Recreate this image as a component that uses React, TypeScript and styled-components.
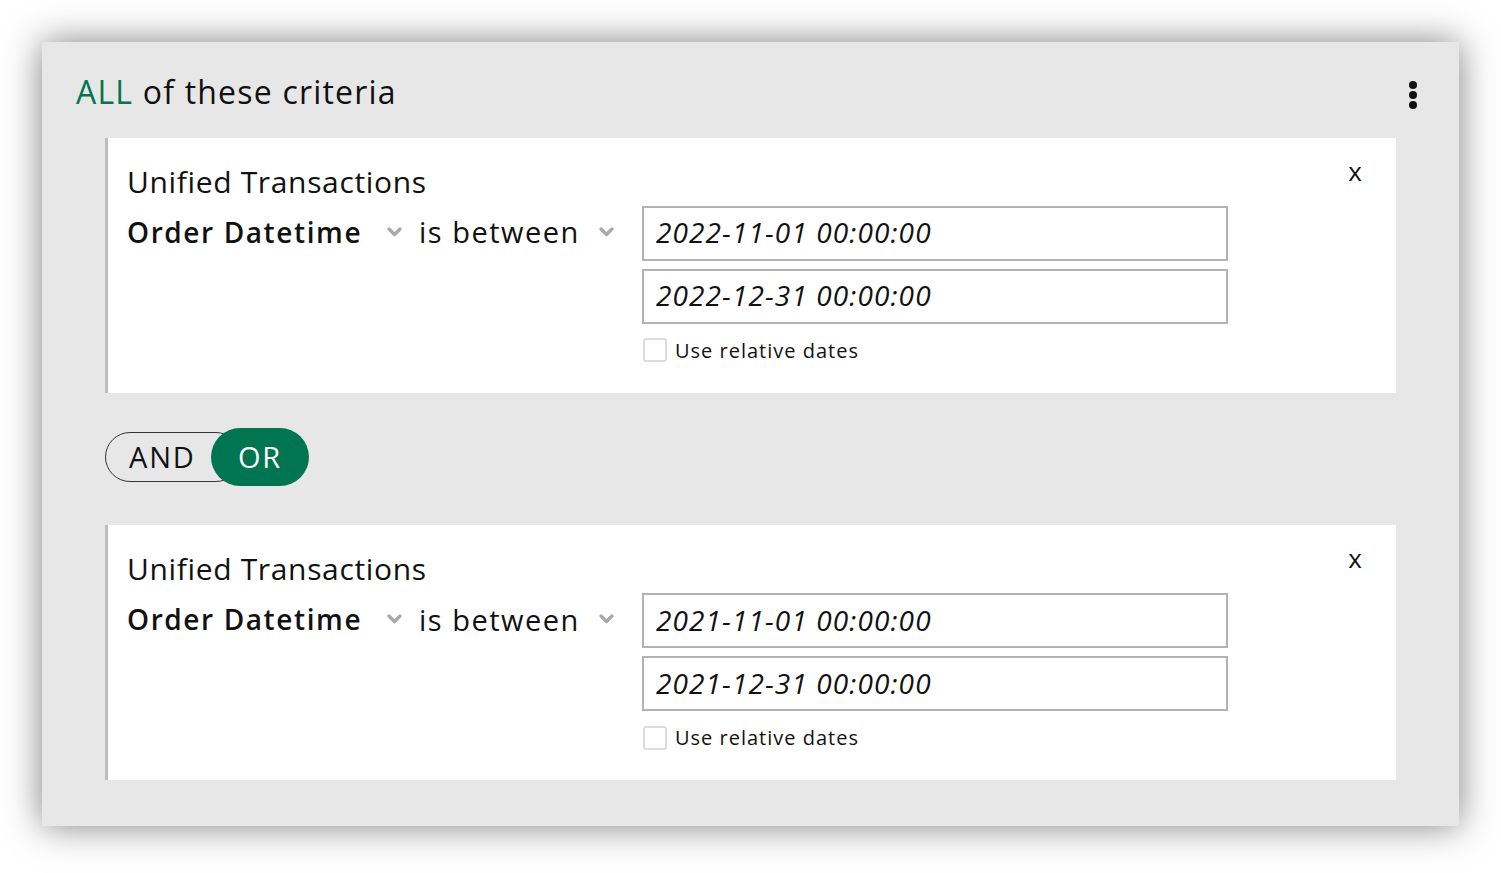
import React from "react";
import styled, { createGlobalStyle } from "styled-components";

const GREEN = "#00754f";
const FONT = `"Open Sans", "Liberation Sans", sans-serif`;

const GlobalStyle = createGlobalStyle`
  html, body {
    margin: 0;
    padding: 0;
    background: #ffffff;
    font-family: ${FONT};
    color: #111;
  }
  * {
    box-sizing: border-box;
  }
`;

const Page = styled.div`
  width: 1501px;
  height: 873px;
  padding: 42px;
`;

const Panel = styled.section`
  width: 1417px;
  height: 784px;
  background: #e7e7e7;
  box-shadow: 0 0 34px rgba(0, 0, 0, 0.5);
  display: flex;
  flex-direction: column;
  padding: 0 63px 46px 63px;
`;

const Header = styled.header`
  height: 96px;
  display: flex;
  align-items: center;
  justify-content: space-between;
  margin-left: -29px;
  margin-right: -22px;
`;

const Title = styled.h1`
  margin: 0;
  font-size: 32px;
  font-weight: 400;
  letter-spacing: 1.2px;
  color: #111;
  line-height: 40px;
  padding-top: 4px;

  span {
    color: ${GREEN};
  }
`;

const MenuButton = styled.button`
  border: none;
  background: transparent;
  padding: 0;
  width: 10px;
  height: 30px;
  display: flex;
  align-items: center;
  justify-content: center;
  cursor: pointer;
  margin-top: 10px;
`;

const Card = styled.div`
  display: flex;
  background: #ffffff;
  border-left: 3px solid #bdbdbd;
  height: 255px;
`;

const CardBody = styled.div`
  flex: 1;
  padding: 24px 0 0 19px;
`;

const SourceName = styled.div`
  font-size: 30px;
  line-height: 40px;
  font-weight: 400;
  letter-spacing: 0.65px;
  color: #111;
`;

const Row = styled.div`
  display: flex;
  margin-top: 4px;
`;

const Selects = styled.div`
  display: flex;
  height: 52px;
  align-items: center;
`;

const Select = styled.div<{ $width: number; $pad: number; $strong?: boolean }>`
  width: ${(p) => p.$width}px;
  padding-right: ${(p) => p.$pad}px;
  display: flex;
  align-items: center;
  justify-content: space-between;
  font-size: ${(p) => (p.$strong ? 28 : 29)}px;
  font-weight: ${(p) => (p.$strong ? 600 : 400)};
  letter-spacing: ${(p) => (p.$strong ? 1.6 : 1.5)}px;
  color: #111;
  cursor: pointer;

  svg {
    flex-shrink: 0;
  }
`;

const Values = styled.div`
  display: flex;
  flex-direction: column;
  gap: 8px;
`;

const DateInput = styled.input`
  width: 586px;
  height: 55px;
  border: 2px solid #b3b3b3;
  padding: 0 12px 2px 12px;
  font-family: ${FONT};
  font-size: 28px;
  font-style: italic;
  letter-spacing: 1.1px;
  color: #111;
  background: #fff;
  outline: none;
`;

const CheckRow = styled.label`
  display: flex;
  align-items: center;
  gap: 8px;
  margin-top: 5px;
  font-size: 20px;
  font-weight: 500;
  letter-spacing: 1px;
  color: #111;
  cursor: pointer;
`;

const Box = styled.span`
  width: 24px;
  height: 24px;
  border: 2px solid #dcdcdc;
  border-radius: 3px;
  margin-left: 1px;
`;

const CloseButton = styled.button`
  align-self: flex-start;
  border: none;
  background: transparent;
  font-family: ${FONT};
  font-size: 26px;
  color: #111;
  padding: 0;
  margin: 18px 33px 0 0;
  width: 16px;
  line-height: 30px;
  cursor: pointer;
`;

const Connector = styled.div`
  height: 133px;
  display: flex;
  align-items: center;
  padding-bottom: 4px;
`;

const Toggle = styled.div`
  display: flex;
  align-items: center;
`;

const ToggleOption = styled.button<{ $active?: boolean }>`
  font-family: ${FONT};
  font-size: 29px;
  letter-spacing: 1.8px;
  border-radius: 30px;
  cursor: pointer;
  ${(p) =>
    p.$active
      ? `
    height: 58px;
    width: 98px;
    margin-left: -30px;
    background: ${GREEN};
    color: #fff;
    border: none;
    position: relative;
    padding: 0;
  `
      : `
    height: 50px;
    width: 136px;
    background: transparent;
    color: #111;
    border: 1px solid #333;
    text-align: left;
    padding: 0 0 0 23px;
  `}
`;

const Chevron = () => (
  <svg width="15" height="10" viewBox="0 0 15 10">
    <polyline points="2,2 7.5,7.5 13,2" fill="none" stroke="#a9a9a9" strokeWidth="3.2" strokeLinecap="round" strokeLinejoin="round" />
  </svg>
);

const Kebab = () => (
  <svg width="10" height="30" viewBox="0 0 10 30">
    <circle cx="5" cy="5" r="4" fill="#111" />
    <circle cx="5" cy="15" r="4" fill="#111" />
    <circle cx="5" cy="25" r="4" fill="#111" />
  </svg>
);

type Criterion = { from: string; to: string };

const criteria: Criterion[] = [
  { from: "2022-11-01 00:00:00", to: "2022-12-31 00:00:00" },
  { from: "2021-11-01 00:00:00", to: "2021-12-31 00:00:00" },
];

const CriterionCard: React.FC<{ c: Criterion }> = ({ c }) => (
  <Card>
    <CardBody>
      <SourceName>Unified Transactions</SourceName>
      <Row>
        <Selects>
          <Select $width={292} $pad={17} $strong>
            Order Datetime <Chevron />
          </Select>
          <Select $width={223} $pad={28}>
            is between <Chevron />
          </Select>
        </Selects>
        <Values>
          <DateInput defaultValue={c.from} />
          <DateInput defaultValue={c.to} />
          <CheckRow>
            <Box />
            Use relative dates
          </CheckRow>
        </Values>
      </Row>
    </CardBody>
    <CloseButton>x</CloseButton>
  </Card>
);

export default function App() {
  return (
    <>
      <GlobalStyle />
      <Page>
        <Panel>
          <Header>
            <Title>
              <span>ALL</span> of these criteria
            </Title>
            <MenuButton>
              <Kebab />
            </MenuButton>
          </Header>
          <CriterionCard c={criteria[0]} />
          <Connector>
            <Toggle>
              <ToggleOption>AND</ToggleOption>
              <ToggleOption $active>OR</ToggleOption>
            </Toggle>
          </Connector>
          <CriterionCard c={criteria[1]} />
        </Panel>
      </Page>
    </>
  );
}
